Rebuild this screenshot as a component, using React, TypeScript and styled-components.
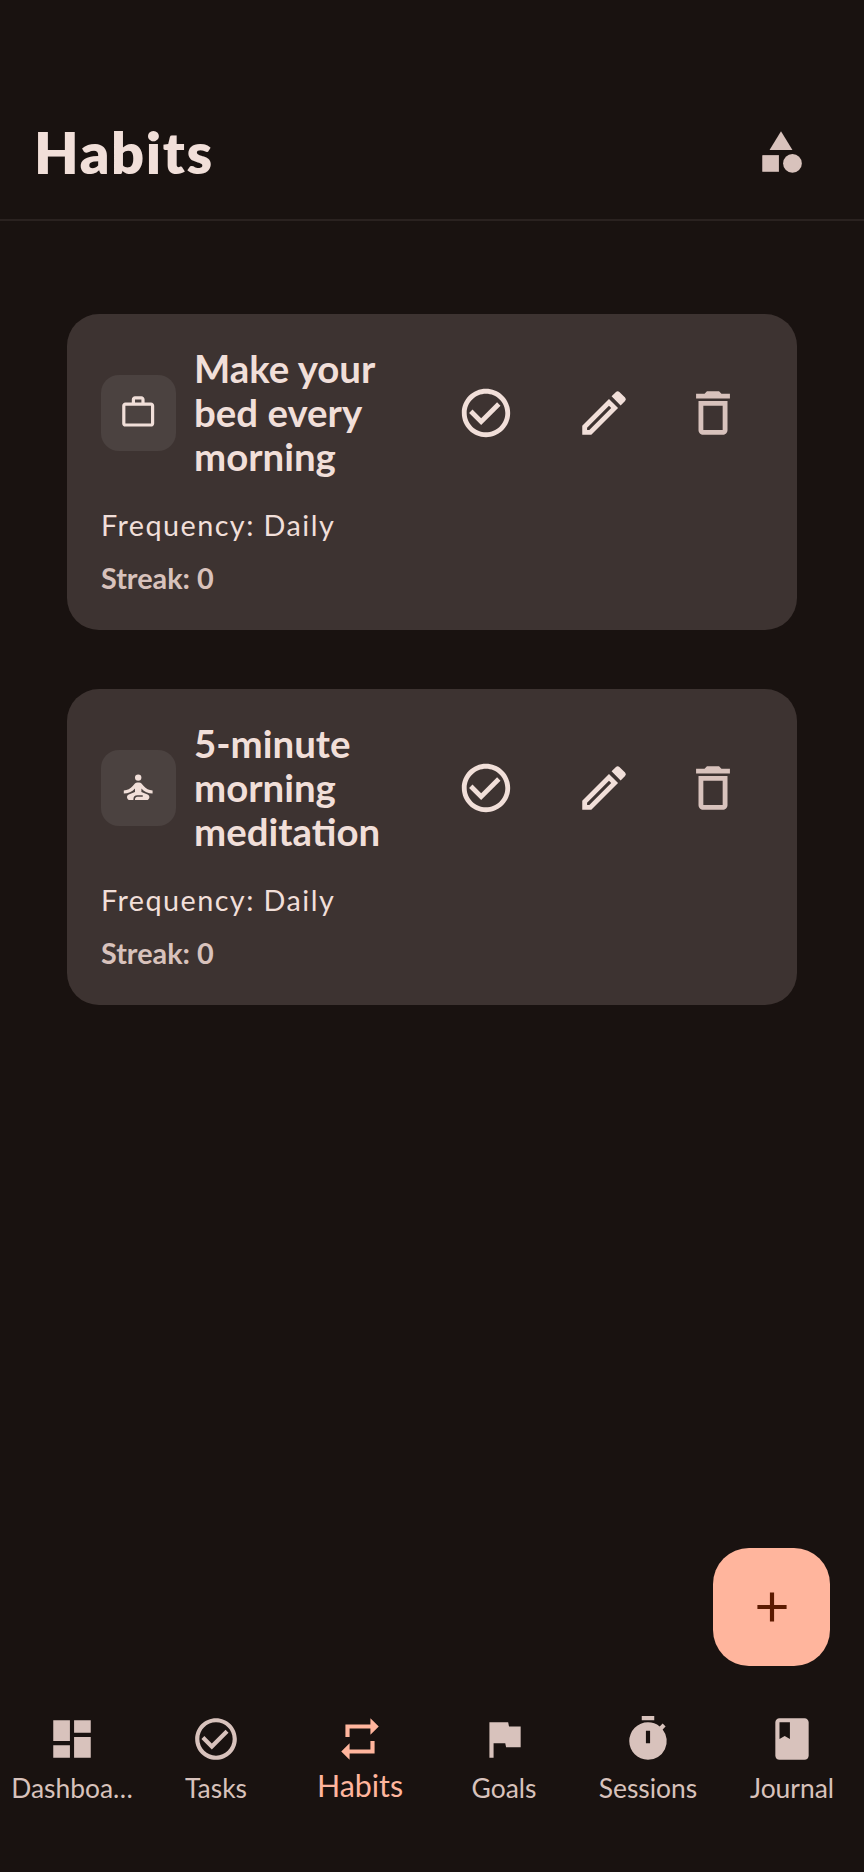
import { createGlobalStyle } from 'styled-components';
import styled from 'styled-components';
import {
    MdAdd,
    MdBook,
    MdCategory,
    MdCheckCircleOutline,
    MdDashboard,
    MdDeleteOutline,
    MdFlag,
    MdOutlineEdit,
    MdRepeat,
    MdSelfImprovement,
    MdTimer,
    MdWorkOutline,
} from 'react-icons/md';
import type { IconType } from 'react-icons';

const GlobalStyle = createGlobalStyle`
    html, body {
        margin: 0;
        padding: 0;
        background: #191210;
    }
    * {
        box-sizing: border-box;
    }
`;

const Page = styled.div`
    position: relative;
    display: flex;
    flex-direction: column;
    height: 1872px;
    background: #191210;
    font-family: Lato, 'Noto Sans', sans-serif;
    color: #f1dfd9;
`;

const Header = styled.header`
    display: flex;
    align-items: center;
    justify-content: space-between;
    height: 221px;
    padding: 84px 58px 0 34px;
    border-bottom: 2px solid #2a2220;
`;

const Title = styled.h1`
    margin: 0;
    font-size: 57.6px;
    font-weight: 800;
    letter-spacing: 1.6px;
    line-height: 72px;
`;

const HeaderIcon = styled.div`
    display: flex;
    color: #d8c2bc;
`;

const Content = styled.main`
    flex: 1;
    display: flex;
    flex-direction: column;
    gap: 59px;
    padding: 93px 67px 0;
`;

const Card = styled.article`
    height: 316px;
    padding: 32px 34px 0;
    background: #3d3331;
    border-radius: 32px;
`;

const CardRow = styled.div`
    display: flex;
    align-items: center;
`;

const IconBox = styled.div`
    flex: none;
    display: flex;
    align-items: center;
    justify-content: center;
    width: 75px;
    height: 76px;
    margin-top: 1px;
    border-radius: 18px;
    background: #4b4240;
    color: #f1dfd9;
`;

const HabitName = styled.h2`
    flex: 1;
    margin: 0 0 0 18px;
    padding-right: 40px;
    font-size: 38.4px;
    font-weight: 700;
    line-height: 44px;
`;

const Actions = styled.div`
    flex: none;
    display: flex;
    margin-top: 1px;
    margin-right: 21px;
`;

const ActionButton = styled.button<{ $muted?: boolean; $gap?: number }>`
    display: flex;
    padding: 0;
    margin-left: ${({ $gap }) => $gap ?? 0}px;
    border: none;
    background: none;
    color: ${({ $muted }) => ($muted ? '#d8c2bc' : '#f1dfd9')};
`;

const Frequency = styled.p`
    margin: 29px 0 0 0;
    font-size: 28.8px;
    line-height: 36px;
    letter-spacing: 1.44px;
    color: #f1dfd9;
`;

const Streak = styled.p`
    margin: 17px 0 0;
    font-size: 28.8px;
    font-weight: 700;
    line-height: 36px;
    color: #d8c2bc;
`;

const Fab = styled.button`
    position: absolute;
    right: 34px;
    bottom: 206px;
    display: flex;
    align-items: center;
    justify-content: center;
    width: 117px;
    height: 118px;
    padding: 0;
    border: none;
    border-radius: 36px;
    background: #ffb59d;
    color: #5c1a00;
`;

const Nav = styled.nav`
    display: grid;
    grid-template-columns: repeat(6, 144px);
    height: 168px;
    padding-top: 10px;
`;

const NavItem = styled.div<{ $active?: boolean }>`
    display: flex;
    flex-direction: column;
    align-items: center;
    color: ${({ $active }) => ($active ? '#ffb59d' : '#d8c2bc')};
`;

const NavLabel = styled.span<{ $active?: boolean }>`
    margin-top: ${({ $active }) => ($active ? 3 : 6)}px;
    font-size: ${({ $active }) => ($active ? 30.4 : 26.4)}px;
    line-height: 36px;
`;

interface Habit {
    name: string;
    icon: IconType;
}

const habits: Habit[] = [
    { name: 'Make your bed every morning', icon: MdWorkOutline },
    { name: '5-minute morning meditation', icon: MdSelfImprovement },
];

const tabs: { label: string; icon: IconType; active?: boolean }[] = [
    { label: 'Dashboa…', icon: MdDashboard },
    { label: 'Tasks', icon: MdCheckCircleOutline },
    { label: 'Habits', icon: MdRepeat, active: true },
    { label: 'Goals', icon: MdFlag },
    { label: 'Sessions', icon: MdTimer },
    { label: 'Journal', icon: MdBook },
];

const App = () => {
    return (
        <Page>
            <GlobalStyle />
            <Header>
                <Title>Habits</Title>
                <HeaderIcon>
                    <MdCategory size={50} />
                </HeaderIcon>
            </Header>
            <Content>
                {habits.map((habit) => (
                    <Card key={habit.name}>
                        <CardRow>
                            <IconBox>
                                <habit.icon size={38.4} />
                            </IconBox>
                            <HabitName>{habit.name}</HabitName>
                            <Actions>
                                <ActionButton>
                                    <MdCheckCircleOutline size={58} />
                                </ActionButton>
                                <ActionButton $gap={60}>
                                    <MdOutlineEdit size={58} />
                                </ActionButton>
                                <ActionButton $gap={51} $muted>
                                    <MdDeleteOutline size={58} />
                                </ActionButton>
                            </Actions>
                        </CardRow>
                        <Frequency>Frequency: Daily</Frequency>
                        <Streak>Streak: 0</Streak>
                    </Card>
                ))}
            </Content>
            <Fab>
                <MdAdd size={50} />
            </Fab>
            <Nav>
                {tabs.map((tab) => (
                    <NavItem key={tab.label} $active={tab.active}>
                        <tab.icon size={50} />
                        <NavLabel $active={tab.active}>{tab.label}</NavLabel>
                    </NavItem>
                ))}
            </Nav>
        </Page>
    );
};

export default App;
